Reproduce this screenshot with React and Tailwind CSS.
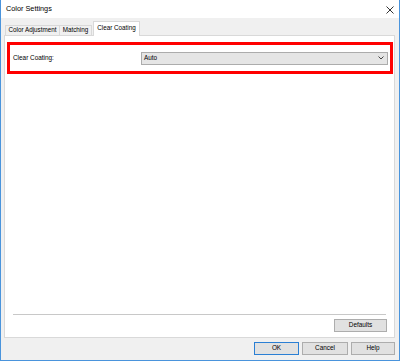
import React from "react";

const font = { fontFamily: '"Liberation Sans", Arial, sans-serif' };

function Btn({ children, w, primary }) {
  return (
    <div
      className={`h-[13px] ${w} flex items-center justify-center bg-[#e1e1e1] border ${primary ? "border-[#2a7fd4]" : "border-[#adadad]"} text-[6.4px] text-black leading-none`}
    >
      {children}
    </div>
  );
}

export default function App() {
  return (
    <div
      className="w-[400px] h-[361px] bg-[#f0f0f0] border-l border-r border-b border-[#4a94dc] flex flex-col overflow-hidden"
      style={font}
    >
      {/* title bar */}
      <div className="h-[18px] bg-white flex items-center justify-between pl-[5px] pr-[5px] shrink-0">
        <span className="text-[7.3px] text-black leading-none">Color Settings</span>
        <svg width="8" height="8" viewBox="0 0 8 8" className="mt-[1px]">
          <path d="M0.5 0.5 L7.5 7.5 M7.5 0.5 L0.5 7.5" stroke="#333" strokeWidth="1" />
        </svg>
      </div>

      <div className="flex-1 flex flex-col pl-[3px] pr-[4px]">
        {/* tabs */}
        <div className="h-[17px] flex items-end pl-[1px] shrink-0">
          <div className="w-[55px] h-[10px] border-t border-l border-r border-[#d9d9d9] bg-[#f0f0f0] flex items-center justify-center text-[6.3px] leading-none text-black">
            Color Adjustment
          </div>
          <div className="-ml-px w-[33px] h-[10px] border-t border-l border-r border-[#d9d9d9] bg-[#f0f0f0] flex items-center justify-center text-[6.3px] leading-none text-black">
            Matching
          </div>
          <div className="relative z-10 ml-[1px] -mb-px w-[47px] h-[15px] border-t border-l border-r border-[#d9d9d9] bg-white flex items-start pt-[3px] justify-center text-[6.3px] leading-none text-black">
            Clear Coating
          </div>
        </div>

        {/* panel */}
        <div className="h-[303px] border border-[#d9d9d9] bg-white flex flex-col shrink-0">
          <div className="mt-[6px] ml-[2px] mr-[1px] h-[32px] border-[3px] border-[#ff0000] flex items-center pl-[3px] pr-[2px]">
            <span className="w-[128px] text-[6.4px] leading-none text-black">Clear Coating:</span>
            <div className="flex-1 h-[13px] bg-[#e5e5e5] border border-[#acacac] flex items-center justify-between pl-[2px] pr-[3px]">
              <span className="text-[6.4px] leading-none text-black">Auto</span>
              <svg width="6" height="4" viewBox="0 0 6 4">
                <path d="M0.5 0.5 L3 3 L5.5 0.5" stroke="#444" strokeWidth="1" fill="none" />
              </svg>
            </div>
          </div>
          <div className="flex-1" />
          <div className="ml-[8px] mr-[8px] h-[1px] bg-[#c8c8c8]" />
          <div className="h-[1px] ml-[8px] mr-[8px] bg-white" />
          <div className="flex justify-end mt-[3px] mr-[7px] mb-[5px]">
            <Btn w="w-[53px]">Defaults</Btn>
          </div>
        </div>

        {/* bottom buttons */}
        <div className="mt-[4px] flex justify-end gap-[3px]">
          <Btn w="w-[45px]" primary>OK</Btn>
          <Btn w="w-[46px]">Cancel</Btn>
          <Btn w="w-[44px]">Help</Btn>
        </div>
      </div>
    </div>
  );
}
